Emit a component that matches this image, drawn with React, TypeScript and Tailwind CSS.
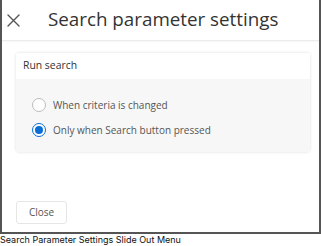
import React, { useState } from 'react';

export default function App() {
  const [mode, setMode] = useState<'changed' | 'button'>('button');

  return (
    <div className="w-[321px] h-[246px] bg-white flex flex-col" style={{ fontFamily: '"Open Sans", sans-serif' }}>
      <div className="h-[234px] border-2 border-t-0 border-[#555] flex flex-col">
        {/* Header */}
        <div className="h-[41px] flex items-center border-b border-[#ececec] shadow-[0_1px_2px_rgba(0,0,0,0.04)] shrink-0">
          <button className="w-[13px] h-[13px] ml-[5px] mt-[1px] text-[#555]">
            <svg width="13" height="13" viewBox="0 0 13 13" fill="none" stroke="currentColor" strokeWidth="1.4" strokeLinecap="round">
              <path d="M1 1l11 11M12 1L1 12" />
            </svg>
          </button>
          <h1 className="ml-[28px] text-[18.8px] leading-none text-[#333] pb-[1px]">Search parameter settings</h1>
        </div>

        {/* Card */}
        <div className="mt-[12px] ml-[14px] mr-[9px] rounded-[3px] shadow-[0_0_3px_rgba(0,0,0,0.15)] overflow-hidden">
          <div className="h-[26px] bg-white flex items-center px-[7px] text-[10.4px] text-[#333]">Run search</div>
          <div className="bg-[#f7f7f7] h-[73px] pt-[19px] px-[16px] flex flex-col gap-[11px]">
            <label className="flex items-center gap-[7px] text-[10px] text-[#555] h-[14px]" onClick={() => setMode('changed')}>
              <span className={`w-[14px] h-[14px] rounded-full border flex items-center justify-center ${mode === 'changed' ? 'border-[#0b6ed6]' : 'border-[#bdbdbd] bg-white'}`}>
                {mode === 'changed' && <span className="w-[8px] h-[8px] rounded-full bg-[#0b6ed6]" />}
              </span>
              When criteria is changed
            </label>
            <label className="flex items-center gap-[7px] text-[10px] text-[#555] h-[14px]" onClick={() => setMode('button')}>
              <span className={`w-[14px] h-[14px] rounded-full border flex items-center justify-center ${mode === 'button' ? 'border-[#0b6ed6] bg-white' : 'border-[#bdbdbd] bg-white'}`}>
                {mode === 'button' && <span className="w-[8px] h-[8px] rounded-full bg-[#0b6ed6]" />}
              </span>
              Only when Search button pressed
            </label>
          </div>
        </div>

        <div className="flex-1" />
        <div className="pl-[14px] pb-[8px]">
          <button className="w-[51px] h-[23px] rounded-[3px] border border-[#e6e6e6] bg-white text-[10px] text-[#555]">Close</button>
        </div>
      </div>
      <div className="text-[9px] leading-[12px] text-[#111]" style={{ fontFamily: 'Inter, sans-serif' }}>
        Search Parameter Settings Slide Out Menu
      </div>
    </div>
  );
}
